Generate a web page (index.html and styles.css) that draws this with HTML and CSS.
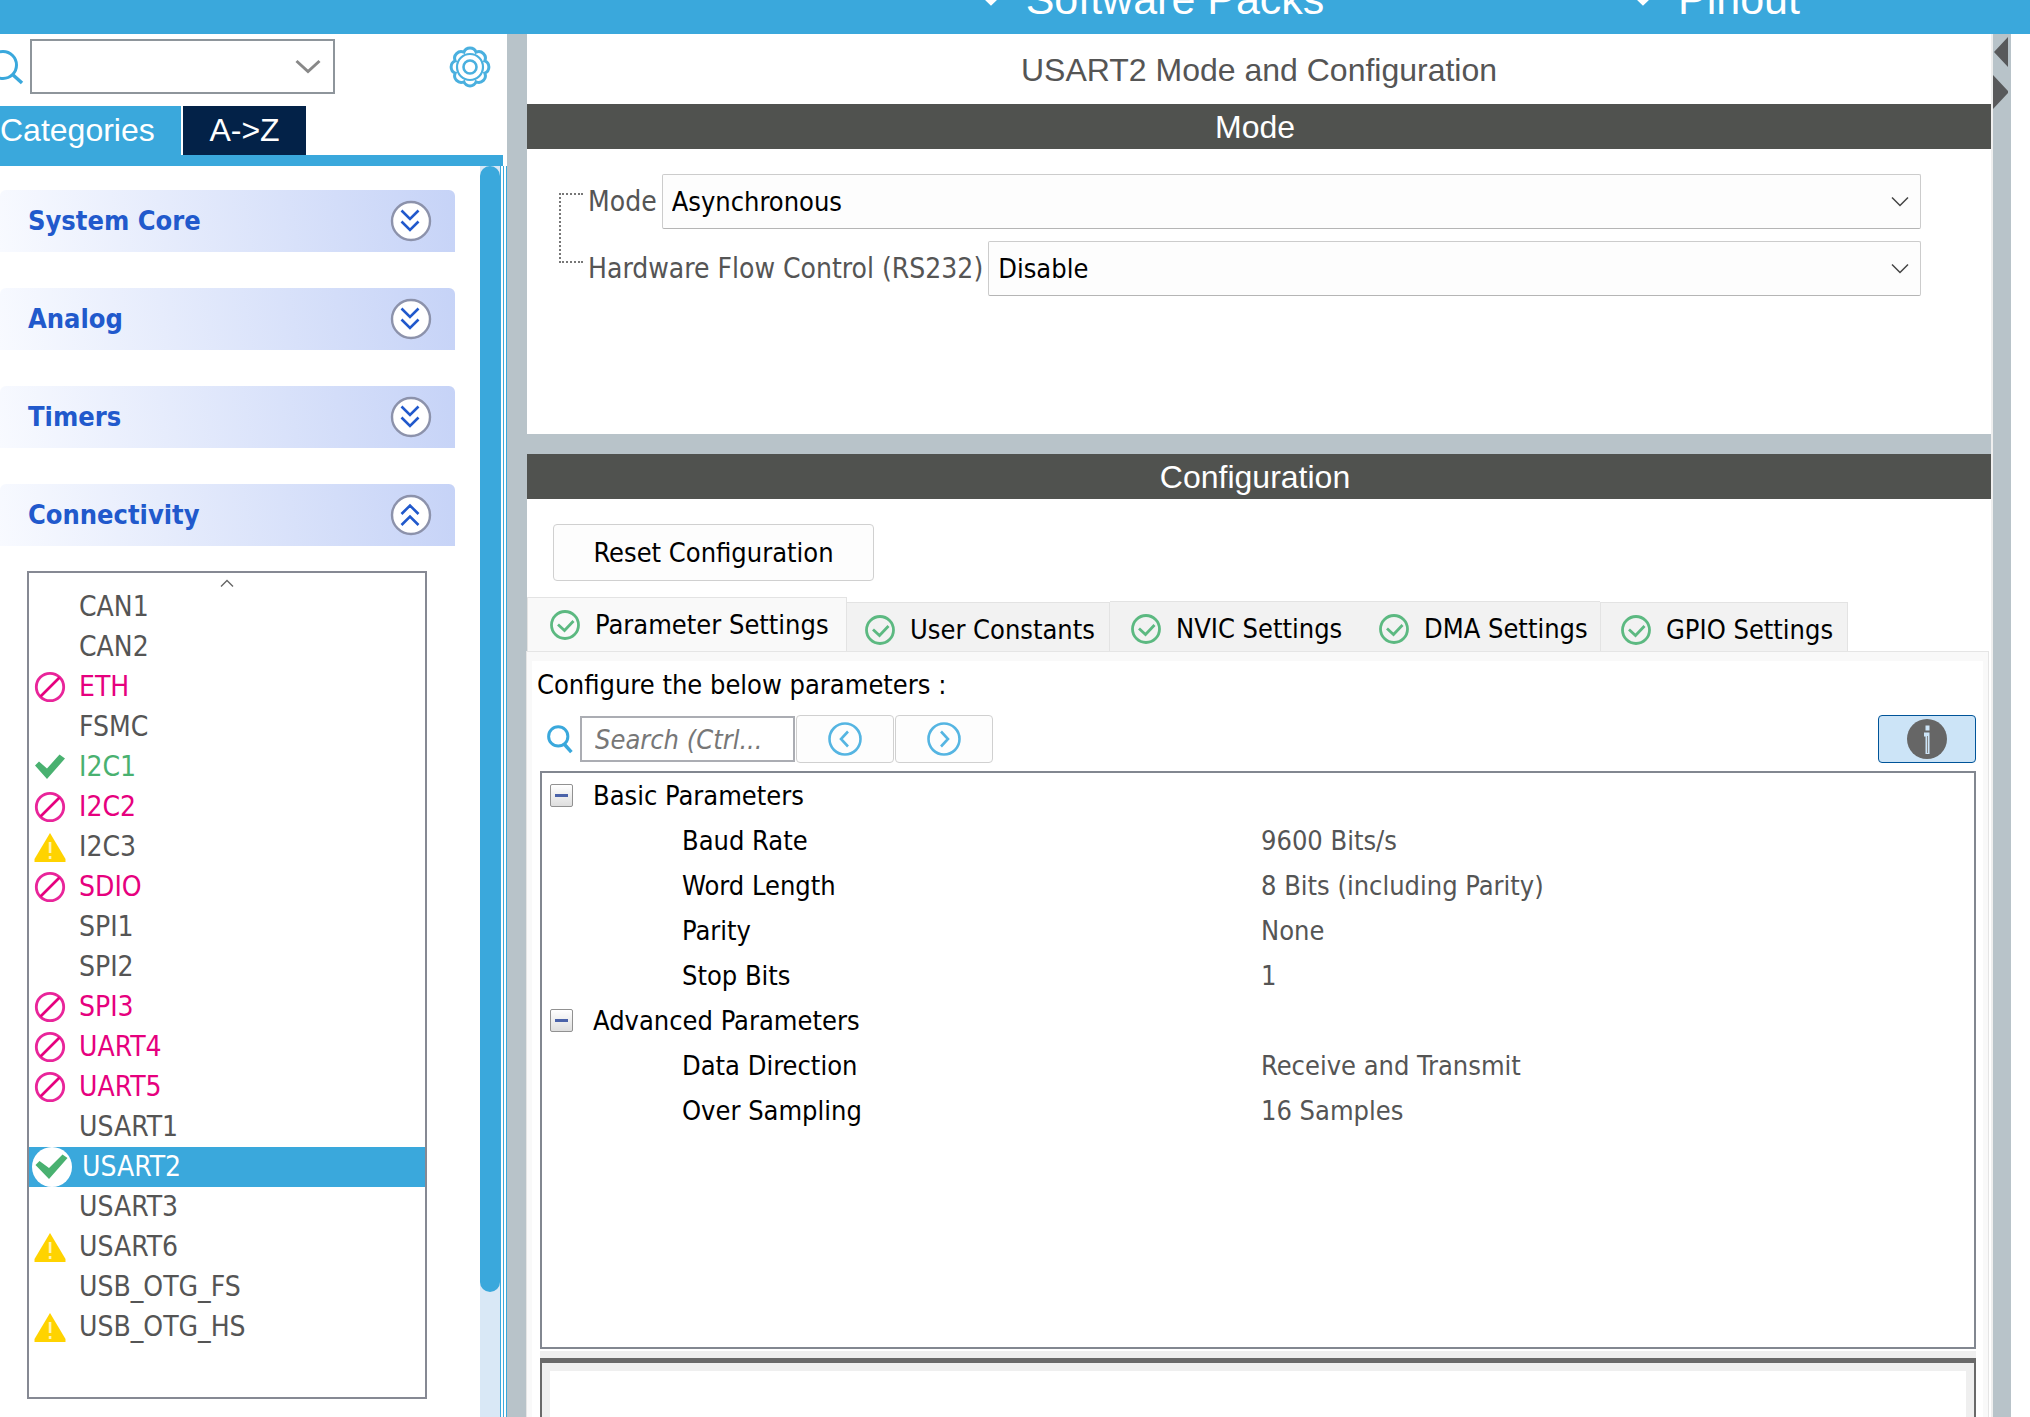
FILE: index.html
```html
<!DOCTYPE html>
<html lang="en">
<head>
<meta charset="utf-8">
<title>USART2 Mode and Configuration</title>
<link rel="stylesheet" href="styles.css">
</head>
<body>
<svg class="sprite" aria-hidden="true">
  <symbol id="blocked" viewBox="0 0 32 32"><circle cx="16" cy="16" r="13.7" fill="none" stroke="#e9259a" stroke-width="2.8"/><path d="M6.5 25.5L25.5 6.5" stroke="#e6007e" stroke-width="2.6"/></symbol>
  <symbol id="tick" viewBox="0 0 32 32"><path d="M1 14.500l4-4 8 7L25.500 3.500l5.500 4L13 28z" fill="#49b170"/></symbol>
  <symbol id="warn" viewBox="0 0 32 32"><path d="M16 2l15.500 26V31H0.500v-3z" fill="#ffd300"/><path d="M16 11v11M16 25v3" stroke="#fff3b8" stroke-width="2.600"/></symbol>
  <symbol id="tick-round" viewBox="0 0 40 40"><circle cx="20" cy="20" r="20" fill="#fff"/><path d="M3.500 18l4-4 9.500 7L30.500 7.500l5 3.500L17 32z" fill="#49b170"/></symbol>
  <symbol id="valid" viewBox="0 0 30 30"><circle cx="15" cy="15" r="13.500" fill="none" stroke="#5cb981" stroke-width="2.800"/><path d="M8 14.500l6.500 6 9-9.500" fill="none" stroke="#5cb981" stroke-width="2.800"/></symbol>
  <symbol id="lens" viewBox="0 0 32 36"><circle cx="14" cy="15" r="11" fill="none" stroke="#3aa8dc" stroke-width="3.400"/><path d="M21 24l8 9" stroke="#3aa8dc" stroke-width="4"/></symbol>
  <symbol id="double-down" viewBox="0 0 42 42"><circle cx="21" cy="21" r="19" fill="#fff" stroke="#8c92ab" stroke-width="2.400"/><path d="M11.500 10.500l8.500 8.500 8.500-8.500M11.500 21.500l8.500 8.500 8.500-8.500" fill="none" stroke="#2159cc" stroke-width="2.600"/></symbol>
  <symbol id="double-up" viewBox="0 0 42 42"><circle cx="21" cy="21" r="19" fill="#fff" stroke="#8c92ab" stroke-width="2.400"/><path d="M11.500 20l8.500-8.500 8.500 8.500M11.500 31l8.500-8.500 8.500 8.500" fill="none" stroke="#2159cc" stroke-width="2.600"/></symbol>
  <symbol id="nav-chevron" viewBox="0 0 22 16"><path d="M2 2l9 8.500L20 2" fill="none" stroke="#fff" stroke-width="6"/></symbol>
  <symbol id="combo-chevron" viewBox="0 0 18 12"><path d="M1 1.500l8 8 8-8" fill="none" stroke="#444" stroke-width="1.500"/></symbol>
</svg>

<nav class="topbar">
  <a class="topbar-item topbar-packs" href="#packs"><svg class="nav-icon"><use href="#nav-chevron"/></svg>Software Packs</a>
  <a class="topbar-item topbar-pinout" href="#pinout"><svg class="nav-icon"><use href="#nav-chevron"/></svg>Pinout</a>
</nav>

<div class="workspace">
  <aside class="sidebar">
    <div class="finder">
      <svg class="finder-lens" viewBox="0 0 24 36" aria-hidden="true"><circle cx="3" cy="16" r="13.500" fill="none" stroke="#3aa8dc" stroke-width="3"/><path d="M12 25l10 9" stroke="#3aa8dc" stroke-width="3.500"/></svg>
      <div class="combo finder-combo">
        <select aria-label="Find peripheral"><option></option></select>
        <svg class="finder-chevron" viewBox="0 0 26 16"><path d="M1.500 2l11.500 10.500L24.500 2" fill="none" stroke="#888" stroke-width="3"/></svg>
      </div>
      <button class="gear" aria-label="Settings">
        <svg viewBox="-21 -21 42 42" fill="none" stroke="#4ab0df"><path stroke-width="3" d="M-6.100-14.800A6.600 6.600 0 0 1 6.100-14.800A6.600 6.600 0 0 1 14.800-6.100A6.600 6.600 0 0 1 14.800 6.100A6.600 6.600 0 0 1 6.100 14.800A6.600 6.600 0 0 1-6.100 14.800A6.600 6.600 0 0 1-14.800 6.100A6.600 6.600 0 0 1-14.800-6.100A6.600 6.600 0 0 1-6.100-14.800z"/><circle r="13" stroke-width="2.200"/><circle r="6.500" stroke-width="2.600"/></svg>
      </button>
    </div>
    <div class="side-tabs">
      <button class="side-tab side-tab-on">Categories</button>
      <button class="side-tab">A-&gt;Z</button>
    </div>
    <div class="side-body">
      <div class="groups">
        <button class="group">System Core<svg class="group-icon"><use href="#double-down"/></svg></button>
        <button class="group">Analog<svg class="group-icon"><use href="#double-down"/></svg></button>
        <button class="group">Timers<svg class="group-icon"><use href="#double-down"/></svg></button>
        <button class="group">Connectivity<svg class="group-icon"><use href="#double-up"/></svg></button>
        <div class="periph-box">
          <svg class="scroll-up" viewBox="0 0 14 8"><path d="M1 7.500l6-6 6 6" fill="none" stroke="#666" stroke-width="1.400"/></svg>
          <ul class="periphs">
            <li><a href="#can1"><i></i>CAN1</a></li>
            <li><a href="#can2"><i></i>CAN2</a></li>
            <li><a class="off" href="#eth"><svg><use href="#blocked"/></svg>ETH</a></li>
            <li><a href="#fsmc"><i></i>FSMC</a></li>
            <li><a class="ok" href="#i2c1"><svg><use href="#tick"/></svg>I2C1</a></li>
            <li><a class="off" href="#i2c2"><svg><use href="#blocked"/></svg>I2C2</a></li>
            <li><a href="#i2c3"><svg><use href="#warn"/></svg>I2C3</a></li>
            <li><a class="off" href="#sdio"><svg><use href="#blocked"/></svg>SDIO</a></li>
            <li><a href="#spi1"><i></i>SPI1</a></li>
            <li><a href="#spi2"><i></i>SPI2</a></li>
            <li><a class="off" href="#spi3"><svg><use href="#blocked"/></svg>SPI3</a></li>
            <li><a class="off" href="#uart4"><svg><use href="#blocked"/></svg>UART4</a></li>
            <li><a class="off" href="#uart5"><svg><use href="#blocked"/></svg>UART5</a></li>
            <li><a href="#usart1"><i></i>USART1</a></li>
            <li><a class="selected" href="#usart2"><svg><use href="#tick-round"/></svg>USART2</a></li>
            <li><a href="#usart3"><i></i>USART3</a></li>
            <li><a href="#usart6"><svg><use href="#warn"/></svg>USART6</a></li>
            <li><a href="#otgfs"><i></i>USB_OTG_FS</a></li>
            <li><a href="#otghs"><svg><use href="#warn"/></svg>USB_OTG_HS</a></li>
          </ul>
        </div>
      </div>
      <div class="scroll-track"><div class="scroll-thumb"></div></div>
      <div class="side-edge"></div>
    </div>
  </aside>

  <main class="main">
    <section class="mode-pane">
      <h1 class="title">USART2 Mode and Configuration</h1>
      <h2 class="band">Mode</h2>
      <div class="mode-form">
        <div class="bracket"></div>
        <div class="fields">
          <div class="field">
            <label for="mode">Mode</label>
            <div class="combo"><select id="mode"><option>Asynchronous</option></select><svg class="combo-icon"><use href="#combo-chevron"/></svg></div>
          </div>
          <div class="field">
            <label for="flow">Hardware Flow Control (RS232)</label>
            <div class="combo"><select id="flow"><option>Disable</option></select><svg class="combo-icon"><use href="#combo-chevron"/></svg></div>
          </div>
        </div>
      </div>
    </section>

    <section class="config-pane">
      <h2 class="band">Configuration</h2>
      <button class="reset">Reset Configuration</button>
      <div class="tabs">
        <button class="tab tab-on"><svg><use href="#valid"/></svg>Parameter Settings</button>
        <button class="tab"><svg><use href="#valid"/></svg>User Constants</button>
        <button class="tab tab-raised"><svg><use href="#valid"/></svg>NVIC Settings</button>
        <button class="tab tab-raised"><svg><use href="#valid"/></svg>DMA Settings</button>
        <button class="tab tab-last"><svg><use href="#valid"/></svg>GPIO Settings</button>
      </div>
      <div class="tab-panel">
        <p class="hint">Configure the below parameters :</p>
        <div class="tools">
          <svg class="tools-lens"><use href="#lens"/></svg>
          <input class="search" type="text" placeholder="Search (Ctrl..." aria-label="Search parameters">
          <button class="tool" aria-label="Previous"><svg viewBox="0 0 36 36" fill="none" stroke="#55b5e2" stroke-width="2.600"><circle cx="18" cy="18" r="15.500"/><path d="M21 10.500L14 18l7 7.500"/></svg></button>
          <button class="tool" aria-label="Next"><svg viewBox="0 0 36 36" fill="none" stroke="#55b5e2" stroke-width="2.600"><circle cx="18" cy="18" r="15.500"/><path d="M15 10.500l7 7.500-7 7.500"/></svg></button>
          <button class="tool tool-info" aria-label="Information"><svg class="info" viewBox="0 0 40 40"><circle cx="20" cy="20" r="20" fill="#666"/><path d="M20.500 6.500v5M17 15.500h3.500V35" fill="none" stroke="#cce4f7" stroke-width="4"/><path d="M20.500 17v17" stroke="#888" stroke-width="1"/></svg></button>
        </div>
        <div class="param-box">
          <table class="params">
            <tbody>
              <tr class="param-group"><th colspan="2"><div><button class="fold" aria-label="Collapse"></button>Basic Parameters</div></th></tr>
              <tr><th>Baud Rate</th><td>9600 Bits/s</td></tr>
              <tr><th>Word Length</th><td>8 Bits (including Parity)</td></tr>
              <tr><th>Parity</th><td>None</td></tr>
              <tr><th>Stop Bits</th><td>1</td></tr>
            </tbody>
            <tbody>
              <tr class="param-group"><th colspan="2"><div><button class="fold" aria-label="Collapse"></button>Advanced Parameters</div></th></tr>
              <tr><th>Data Direction</th><td>Receive and Transmit</td></tr>
              <tr><th>Over Sampling</th><td>16 Samples</td></tr>
            </tbody>
          </table>
        </div>
        <div class="help-wrap"><div class="help-box"><div class="help"></div></div></div>
      </div>
    </section>
  </main>

  <div class="splitter">
    <svg viewBox="0 0 18 80" aria-hidden="true"><path d="M15 3v30L1 18zM0 41l15 16v2L0 75z" fill="#58595b"/></svg>
  </div>
</div>
</body>
</html>
```

FILE: styles.css
```css
* { box-sizing: border-box; }

body {
  margin: 0;
  height: 100vh;
  display: flex;
  flex-direction: column;
  overflow: hidden;
  background: #fff;
  color: #000;
  font-family: "DejaVu Sans Condensed", "Noto Sans", sans-serif;
  font-size: 27px;
  line-height: 40px;
}

button, select, input { font: inherit; color: inherit; margin: 0; }
button { padding: 0; border: 0; background: none; }
a { color: inherit; text-decoration: none; }
svg { display: block; flex: none; }
.sprite { width: 0; height: 0; position: absolute; }

/* top navigation */
.topbar {
  flex: none;
  height: 34px;
  padding: 0 32px 11px 0;
  display: grid;
  grid-template-columns: 1fr 564px 564px;
  align-content: end;
  overflow: hidden;
  background: #3aa8dc;
  color: #fff;
  font: 43px/48px "Liberation Sans", Arial, sans-serif;
}
.topbar-item { display: flex; align-items: center; justify-content: center; gap: 24px; grid-row: 1; }
.topbar-packs { grid-column: 2; }
.topbar-pinout { grid-column: 3; }
.nav-icon { width: 22px; height: 16px; }

.workspace { flex: 1; min-height: 0; display: flex; }

/* sidebar */
.sidebar { flex: none; width: 507px; display: flex; flex-direction: column; }
.finder { display: flex; align-items: center; height: 72px; padding: 0 16px 7px 0; }
.finder-lens { width: 24px; height: 36px; margin-right: 6px; }
.finder-chevron { width: 26px; height: 16px; margin-right: 14px; }
.gear { margin-left: auto; }
.gear svg { width: 42px; height: 42px; }

.combo { display: grid; flex: 1; align-items: center; }
.combo > * { grid-area: 1 / 1; }
.combo > svg { justify-self: end; pointer-events: none; }
.combo select {
  appearance: none;
  width: 100%;
  height: 55px;
  padding: 0 9px;
  border: 1px solid #ccc;
  border-bottom-color: #b5b5b5;
  border-radius: 2px;
  background: #fdfdfd;
}
.combo-icon { width: 18px; height: 12px; margin-right: 12px; }
.finder-combo { flex: none; width: 305px; }
.finder-combo select { border: 2px solid #8e959b; border-radius: 0; background: #fff; }

.side-tabs {
  display: flex;
  gap: 2px;
  border-bottom: 11px solid #3aa8dc;
  margin-right: 4px;
  font: 32px/49px "Liberation Sans", Arial, sans-serif;
  color: #fff;
}
.side-tab { width: 123px; height: 49px; background: #032248; }
.side-tab-on { width: 181px; background: #3aa8dc; text-align: left; }

.side-body { flex: 1; min-height: 0; display: flex; }
.groups {
  flex: 1;
  display: flex;
  flex-direction: column;
  gap: 36px;
  padding: 24px 25px 0 0;
}
.group {
  flex: none;
  height: 62px;
  padding: 0 23px 0 28px;
  display: flex;
  align-items: center;
  justify-content: space-between;
  border-radius: 6px 6px 0 0;
  background: linear-gradient(80deg, #f8faff, #c6d3f7);
  color: #2159cc;
  font-weight: bold;
}
.group-icon { width: 42px; height: 42px; }

.periph-box {
  flex: none;
  margin: -11px 28px 0 27px;
  padding-bottom: 50px;
  border: 2px solid #868993;
}
.scroll-up { width: 14px; height: 8px; margin: 6px auto 0; }
.periphs { list-style: none; margin: 0; padding: 0; color: #555; font-size: 28px; }
.periphs a { display: flex; align-items: center; gap: 13px; height: 40px; padding-left: 5px; }
.periphs svg, .periphs i { width: 32px; height: 32px; }
.periphs .off { color: #e6007e; }
.periphs .ok { color: #49b170; }
.periphs .selected { background: #3aa8dc; color: #fff; padding-left: 3px; gap: 10px; }
.periphs .selected svg { width: 40px; height: 40px; }

.scroll-track { width: 20px; background: #d9e8f6; }
.scroll-thumb { height: 90%; border-radius: 10px; background: #3aa8dc; }
.side-edge {
  width: 7px;
  border: solid #3aa8dc;
  border-width: 0 1px;
  background: linear-gradient(90deg, #fff 2px, #3aa8dc 2px, #3aa8dc 3px, #fff 3px);
}

/* main column */
.main {
  flex: 1;
  min-width: 0;
  display: flex;
  flex-direction: column;
  gap: 20px;
  padding-left: 20px;
  background: #b8c3c9;
  border-right: 2px solid #eee;
}
.mode-pane { flex: none; height: 400px; background: #fff; }
.config-pane { flex: 1; min-height: 0; display: flex; flex-direction: column; background: #fff; }
.title, .band {
  margin: 0;
  text-align: center;
  font: 32px/47px "Liberation Sans", Arial, sans-serif;
}
.title { height: 70px; line-height: 73px; color: #555; }
.band { flex: none; height: 45px; background: #50524f; color: #fff; padding-right: 8px; }

.mode-form { display: flex; padding: 25px 70px 0 32px; }
.bracket {
  flex: none;
  width: 24px;
  height: 70px;
  margin: 19px 5px 0 0;
  border: 2px dotted #777;
  border-right: 0;
}
.fields { flex: 1; display: flex; flex-direction: column; gap: 12px; }
.field { display: flex; align-items: center; gap: 5px; color: #555; }
.field label { font-size: 28px; }
.field select { color: #000; }

.reset {
  align-self: flex-start;
  width: 321px;
  height: 57px;
  margin: 25px 0 16px 26px;
  border: 1px solid #d0d0d0;
  border-radius: 4px;
  background: #fdfdfd;
}

.tabs {
  flex: none;
  display: grid;
  grid-template-columns: 320px 263px 248px 242px 248px;
  align-items: end;
  height: 55px;
}
.tab {
  display: flex;
  align-items: center;
  gap: 15px;
  height: 50px;
  padding: 4px 0 0 18px;
  border: 1px solid #e3e3e3;
  border-width: 1px 1px 0 0;
  background: #f2f2f2;
  white-space: nowrap;
}
.tab svg { width: 30px; height: 30px; }
.tab-on { height: 55px; padding: 0 0 1px 22px; border-left-width: 1px; background: #f9f9f9; }
.tab-raised { height: 51px; padding-left: 21px; border-right: 0; }
.tab-last { padding-left: 20px; border-left-width: 1px; }

.tab-panel {
  flex: 1;
  min-height: 0;
  margin-right: 3px;
  padding: 4px 7px 0 8px;
  border: solid #f9f9f9;
  border-width: 9px 5px 0;
  outline: 1px solid #e5e5e5;
  display: flex;
  flex-direction: column;
  background: #fff;
}
.hint { margin: 0 0 10px -3px; }
.tools { flex: none; display: flex; align-items: center; gap: 1px; margin-bottom: 8px; }
.tools-lens { width: 28px; height: 32px; margin: 0 5px 0 6px; }
.search {
  width: 215px;
  height: 46px;
  padding: 0 13px;
  border: 2px solid #abadb3;
  background: #fff;
  font-style: italic;
}
.search::placeholder { color: #777; opacity: 1; }
.tool {
  width: 98px;
  height: 48px;
  display: grid;
  place-items: center;
  border: 1px solid #d0d0d0;
  border-radius: 4px;
  background: #fdfdfd;
}
.tool svg { width: 36px; height: 36px; }
.tool-info { margin-left: auto; border-color: #005499; background: #cce4f7; }
.tool-info .info { width: 40px; height: 40px; }

.param-box { flex: none; height: 578px; border: 2px solid #828790; }
.params { width: 100%; border-collapse: collapse; table-layout: fixed; }
.params tr { height: 45px; }
.params th { padding: 0 0 0 140px; font-weight: normal; text-align: left; }
.params td { padding: 0 0 0 3px; color: #555; }
.params .param-group th { padding: 0 0 0 8px; }
.param-group div { display: flex; align-items: center; gap: 20px; }
.fold {
  width: 23px;
  height: 23px;
  display: grid;
  place-items: center;
  border: 1px solid #919191;
  border-radius: 2px;
  background: linear-gradient(#fff, #dedede);
}
.fold::before { content: ""; width: 13px; height: 3px; background: #4b63a9; }

.help-wrap { flex: 1; min-height: 0; display: flex; margin-top: 2px; padding-top: 7px; background: #efefef; }
.help-box {
  flex: 1;
  display: flex;
  padding: 8px 8px 0;
  border: solid #696969;
  border-width: 5px 2px 0;
}
.help { flex: 1; background: #fff; }

/* right splitter */
.splitter { flex: none; width: 18px; margin-right: 19px; background: #b8c3c9; }
.splitter svg { width: 18px; height: 80px; }
```
